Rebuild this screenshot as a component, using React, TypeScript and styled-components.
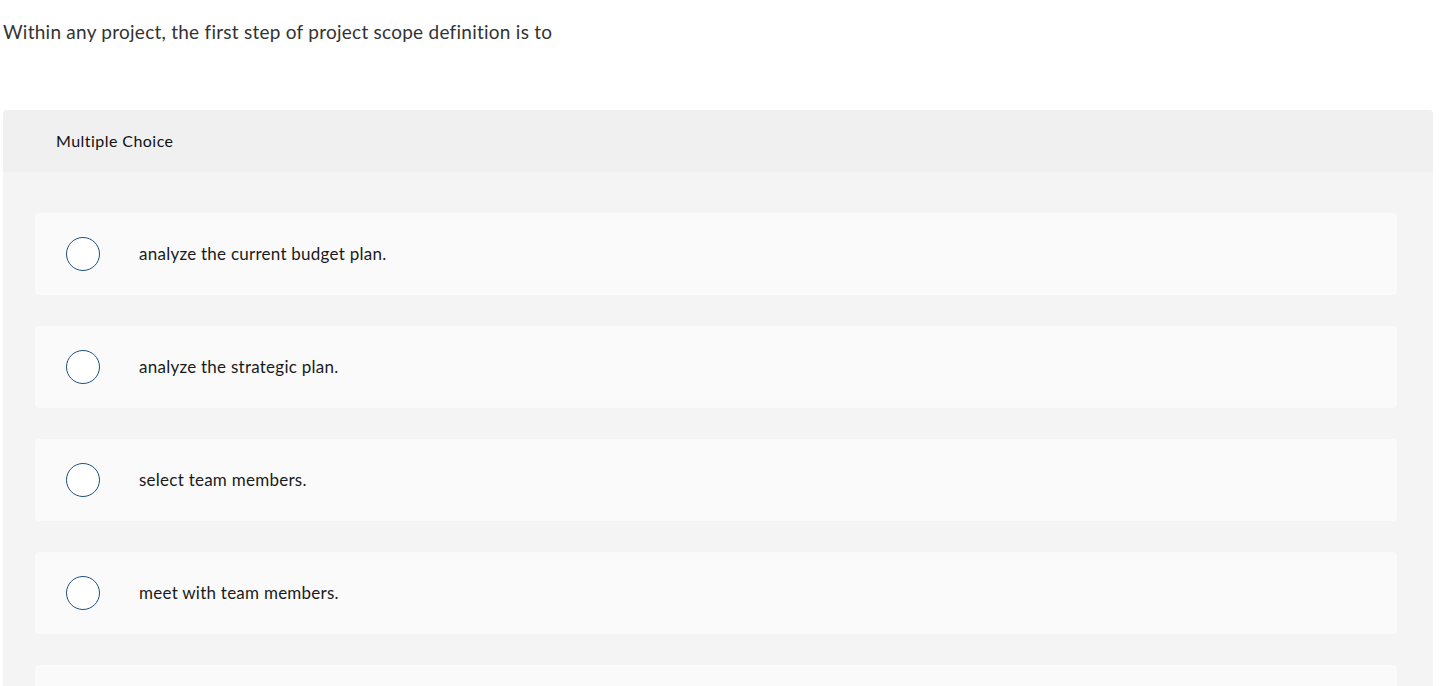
import React from "react";
import styled, { createGlobalStyle } from "styled-components";

const Global = createGlobalStyle`
  html, body { margin: 0; padding: 0; background: #fff; }
  body {
    font-family: "Lato", "Open Sans", sans-serif;
    font-variant-ligatures: none;
    font-feature-settings: "liga" 0;
  }
`;

const Page = styled.div`
  padding: 0 6px 0 3px;
`;

const Question = styled.p`
  margin: 0;
  padding-top: 20px;
  height: 110px;
  box-sizing: border-box;
  font-size: 19px;
  line-height: 24px;
  letter-spacing: 0.25px;
  color: #333;
`;

const Panel = styled.section`
  border-radius: 4px 4px 0 0;
  overflow: hidden;
  background: #f4f4f4;
`;

const Header = styled.div`
  height: 62px;
  box-sizing: border-box;
  padding: 0 0 2px 53px;
  background: #f0f0f0;
  display: flex;
  align-items: center;
  font-size: 16px;
  letter-spacing: 0.45px;
  color: #111;
`;

const Options = styled.div`
  display: flex;
  flex-direction: column;
  gap: 31px;
  padding: 41px 36px 40px 32px;
`;

const Option = styled.label`
  height: 82px;
  box-sizing: border-box;
  background: #fafafa;
  border-radius: 4px;
  display: flex;
  align-items: center;
  padding: 0 0 0 31px;
  font-size: 17px;
  letter-spacing: 0.25px;
  color: #1a1a1a;
  cursor: pointer;
`;

const Radio = styled.span`
  width: 32px;
  height: 32px;
  border-radius: 50%;
  border: 1.5px solid #1d4f86;
  background: #fff;
  flex-shrink: 0;
  margin-right: 39px;
`;

const Label = styled.span`
  position: relative;
  top: -1px;
`;

const choices = [
  "analyze the current budget plan.",
  "analyze the strategic plan.",
  "select team members.",
  "meet with team members.",
  "",
];

export default function App() {
  return (
    <>
      <Global />
      <Page>
        <Question>Within any project, the first step of project scope definition is to</Question>
        <Panel>
          <Header>Multiple Choice</Header>
          <Options>
            {choices.map((c, i) => (
              <Option key={i}>
                {c && <Radio />}
                {c && <Label>{c}</Label>}
              </Option>
            ))}
          </Options>
        </Panel>
      </Page>
    </>
  );
}
